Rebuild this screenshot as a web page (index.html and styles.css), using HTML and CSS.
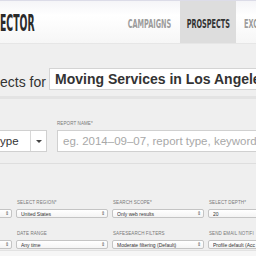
FILE: index.html
```html
<!DOCTYPE html>
<html lang="en">
<head>
    <meta charset="UTF-8">
    <title>Prospects</title>
    <link rel="stylesheet" href="styles.css">
</head>
<body>
    <div class="header">
        <div class="logo"><span>ECTOR</span></div>
        <div class="nav">
            <a class="nav-item"><span>CAMPAIGNS</span></a>
            <a class="nav-item active"><span>PROSPECTS</span></a>
            <a class="nav-item last"><span>EXC</span></a>
        </div>
    </div>

    <div class="title-row">
        <div class="title">ects for</div>
        <div class="title-input">Moving Services in Los Angele</div>
    </div>

    <div class="report-row">
        <div class="type-select">
            <span class="type-text">ype</span>
            <span class="caret-box"><span class="caret"></span></span>
        </div>
        <div class="report-field">
            <div class="label">REPORT NAME*</div>
            <div class="report-input">eg. 2014–09–07, report type, keyword</div>
        </div>
    </div>

    <div class="settings">
        <div class="field"><div class="label">&nbsp;</div><div class="mini-select"><span></span><i>⇕</i></div></div>
        <div class="field"><div class="label">SELECT REGION*</div><div class="mini-select"><span>United States</span><i>⇕</i></div></div>
        <div class="field"><div class="label">SEARCH SCOPE*</div><div class="mini-select"><span>Only web results</span><i>⇕</i></div></div>
        <div class="field"><div class="label">SELECT DEPTH*</div><div class="mini-select"><span>20</span><i>⇕</i></div></div>

        <div class="field"><div class="label">&nbsp;</div><div class="mini-select"><span></span><i>⇕</i></div></div>
        <div class="field"><div class="label">DATE RANGE</div><div class="mini-select"><span>Any time</span><i>⇕</i></div></div>
        <div class="field"><div class="label">SAFESEARCH FILTERS</div><div class="mini-select"><span>Moderate filtering (Default)</span><i>⇕</i></div></div>
        <div class="field"><div class="label">SEND EMAIL NOTIFI</div><div class="mini-select"><span>Profile default (Acc</span><i>⇕</i></div></div>
    </div>
    <div class="footer-band"></div>
</body>
</html>
```

FILE: styles.css
```css
* {
    margin: 0;
    padding: 0;
    box-sizing: border-box;
}

body {
    font-family: 'Liberation Sans', Arial, sans-serif;
    background: #efefef;
    width: 256px;
    height: 256px;
    overflow: hidden;
}

.header {
    height: 44px;
    display: flex;
    border-top: 1px solid #dcdce8;
    background: linear-gradient(#f5f5f8 0%, #ffffff 35%, #f6f6f6 100%);
    border-bottom: 1px solid #e6e6e6;
}

.logo {
    width: 121px;
    flex-shrink: 0;
    display: flex;
    align-items: center;
    font-family: 'DejaVu Sans Condensed', 'DejaVu Sans', sans-serif;
    font-weight: bold;
    font-size: 22px;
    color: #2b2b2b;
    padding-top: 2px;
}

.logo span {
    display: inline-block;
    transform: scale(0.47, 1.05);
    transform-origin: left center;
}

.nav {
    display: flex;
    gap: 2px;
    flex-shrink: 0;
}

.nav-item {
    width: 57px;
    flex-shrink: 0;
    display: flex;
    justify-content: center;
    align-items: center;
    padding-top: 2px;
    font-family: 'DejaVu Sans Condensed', 'DejaVu Sans', sans-serif;
    font-weight: bold;
    font-size: 12.5px;
    color: #9c9c9c;
}

.nav-item span {
    display: inline-block;
    transform: scaleX(0.58);
}

.nav-item.active {
    width: 56px;
    background: #dddddd;
    color: #333;
}

.nav-item.last {
    justify-content: flex-start;
    padding-left: 6px;
}

.nav-item.last span {
    transform-origin: left center;
}

.title-row {
    display: flex;
    align-items: center;
    padding-top: 24px;
    padding-bottom: 6px;
    border-bottom: 3px solid #e3e3e3;
    height: 55px;
}

.title {
    width: 49px;
    flex-shrink: 0;
    font-size: 14px;
    color: #333;
    padding-top: 6px;
}

.title-input {
    flex: 1;
    height: 22px;
    background: #fff;
    border: 1px solid #d4d4d4;
    border-right: none;
    padding-left: 5px;
    font-size: 14px;
    font-weight: bold;
    color: #333;
    line-height: 20px;
    white-space: nowrap;
    overflow: hidden;
}

.report-row {
    display: flex;
    align-items: flex-end;
    gap: 10px;
    padding-bottom: 11px;
    border-bottom: 1px solid #dedede;
    height: 65px;
}

.type-select {
    width: 47px;
    flex-shrink: 0;
    height: 22px;
    display: flex;
    background: #fff;
    border: 1px solid #d0d0d0;
    border-left: none;
    font-size: 11.5px;
    color: #333;
}

.type-text {
    flex: 1;
    line-height: 20px;
}

.caret-box {
    width: 16px;
    border-left: 1px solid #d8d8d8;
    display: flex;
    justify-content: center;
    align-items: center;
}

.caret {
    width: 0;
    height: 0;
    border-left: 3px solid transparent;
    border-right: 3px solid transparent;
    border-top: 3px solid #444;
}

.report-field {
    flex: 1;
}

.label {
    font-size: 4.5px;
    line-height: 6px;
    color: #777;
    letter-spacing: 0.1px;
    margin-bottom: 3px;
    white-space: nowrap;
}

.report-input {
    height: 22px;
    background: #fff;
    border: 1px solid #d0d0d0;
    border-right: none;
    padding-left: 5px;
    font-size: 11.5px;
    line-height: 20px;
    color: #a8a8a8;
    white-space: nowrap;
    overflow: hidden;
}

.settings {
    display: grid;
    grid-template-columns: repeat(4, 92px);
    column-gap: 4px;
    row-gap: 13px;
    margin-left: -80px;
    padding-top: 36px;
    padding-bottom: 4px;
    height: 87px;
    border-bottom: 1px solid #e2e2e2;
}

.field .label {
    padding-left: 1px;
}

.mini-select {
    height: 9px;
    display: flex;
    align-items: center;
    background: linear-gradient(#ffffff, #f4f4f4);
    border: 1px solid #c4c4c4;
    border-radius: 2px;
    padding: 0 2px 0 4px;
    font-size: 5px;
    color: #333;
    white-space: nowrap;
    overflow: hidden;
}

.mini-select span {
    flex: 1;
    overflow: hidden;
}

.mini-select i {
    font-style: normal;
    font-size: 4.5px;
    color: #555;
}

.footer-band {
    height: 6px;
    background: #f6f6f6;
}
```
